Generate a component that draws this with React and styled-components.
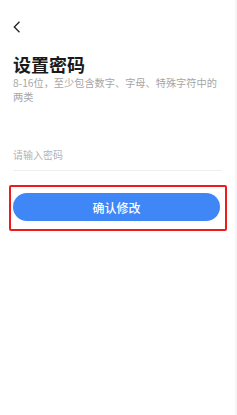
import styled, { createGlobalStyle } from "styled-components";

const GlobalStyle = createGlobalStyle`
  html, body {
    margin: 0;
    padding: 0;
    background: #fff;
  }
  body {
    font-family: "Noto Sans CJK SC", "Noto Sans", sans-serif;
  }
`;

const Page = styled.div`
  min-height: 415px;
  box-sizing: border-box;
  padding: 0 13px;
  border-right: 2px solid #f5f5f5;
`;

const Header = styled.div`
  padding-top: 21px;
  height: 12px;
  display: flex;
  align-items: center;
`;

const BackButton = styled.button`
  border: none;
  background: none;
  padding: 0;
  display: flex;
  cursor: pointer;
`;

const Title = styled.h1`
  margin: 19px 0 0;
  font-size: 18px;
  line-height: 24px;
  font-weight: 700;
  color: #1a1a1a;
`;

const Hint = styled.p`
  margin: 0;
  font-size: 10.2px;
  line-height: 14px;
  color: #a6a6a6;
`;

const HintLine = styled.span`
  display: block;
  white-space: nowrap;
`;

const Field = styled.input`
  display: block;
  width: 100%;
  box-sizing: border-box;
  margin-top: 35px;
  height: 32px;
  border: none;
  border-bottom: 1px solid #eeeeee;
  padding: 0;
  font-family: inherit;
  font-size: 10px;
  color: #333;
  outline: none;
  background: transparent;

  &::placeholder {
    color: #b3b3b3;
  }
`;

const Highlight = styled.div`
  margin: 14px -5px 0 -4px;
  padding: 6px 5px 8px 2px;
  border: 2px solid #ec1c1c;
  border-radius: 2px;
`;

const SubmitButton = styled.button`
  display: block;
  width: 100%;
  height: 28px;
  border: none;
  border-radius: 14px;
  background: #3f86f6;
  color: #fff;
  font-family: inherit;
  font-size: 12px;
  font-weight: 500;
  cursor: pointer;
`;

export default function App() {
  return (
    <>
      <GlobalStyle />
      <Page>
        <Header>
          <BackButton aria-label="返回">
            <svg width="8" height="12" viewBox="0 0 8 12" fill="none">
              <path d="M6.5 0.8 L1.3 6 L6.5 11.2" stroke="#222" strokeWidth="1.3" />
            </svg>
          </BackButton>
        </Header>
        <Title>设置密码</Title>
        <Hint>
          <HintLine>8-16位，至少包含数字、字母、特殊字符中的</HintLine>
          <HintLine>两类</HintLine>
        </Hint>
        <Field type="password" placeholder="请输入密码" />
        <Highlight>
          <SubmitButton>确认修改</SubmitButton>
        </Highlight>
      </Page>
    </>
  );
}
